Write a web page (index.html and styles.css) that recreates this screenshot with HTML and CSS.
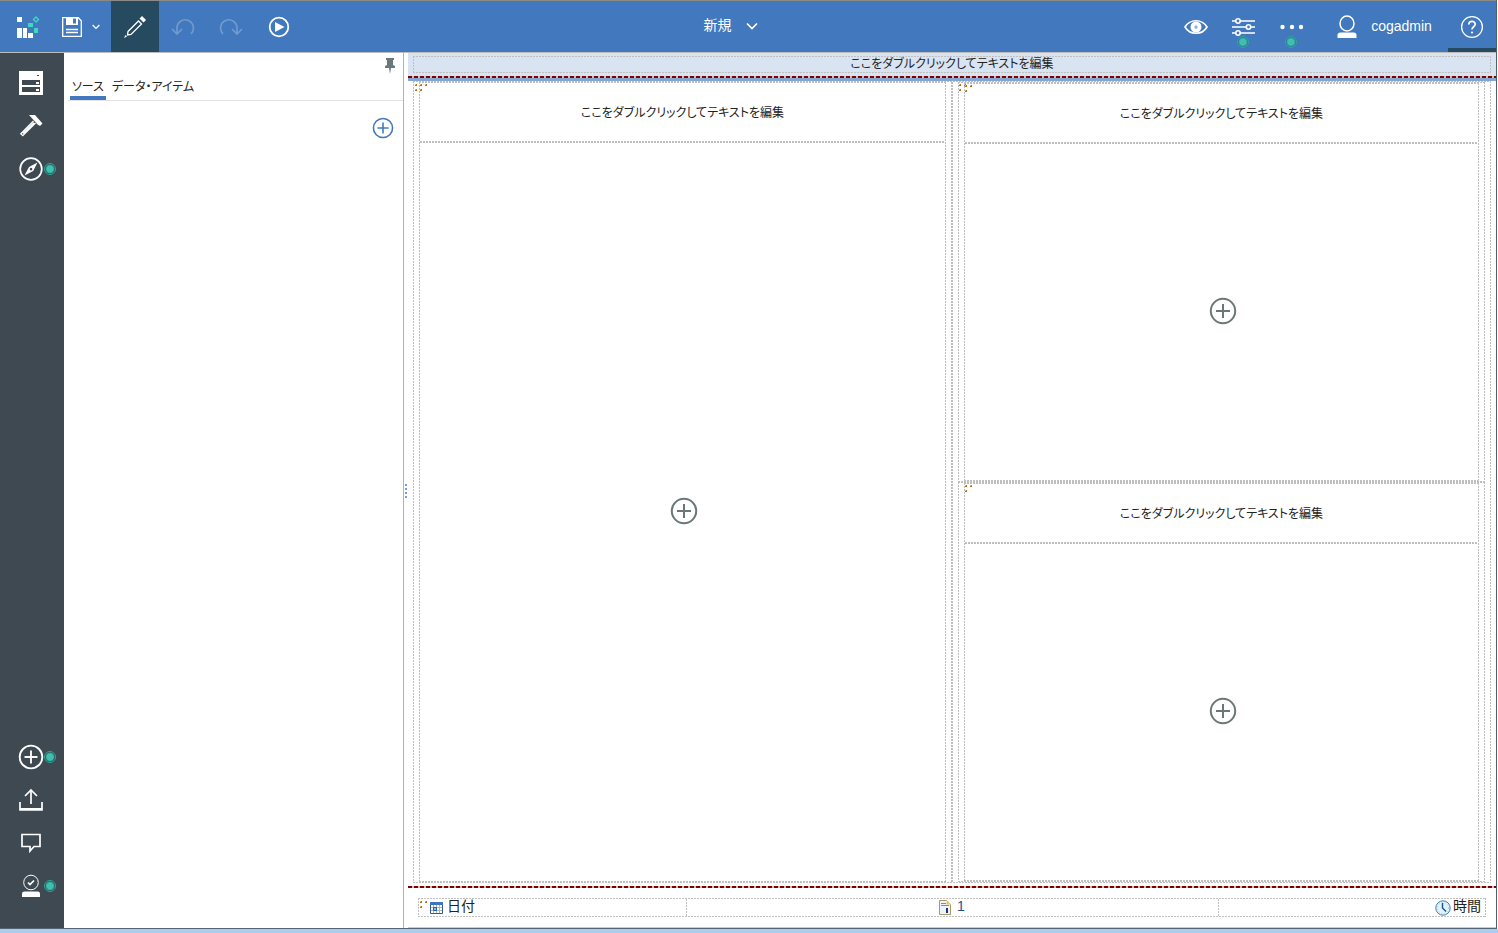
FILE: index.html
```html
<!DOCTYPE html>
<html lang="ja">
<head>
    <meta charset="UTF-8">
    <meta name="viewport" content="width=device-width, initial-scale=1.0">
    <title>新規</title>
    <link rel="stylesheet" href="styles.css">
</head>
<body>
  <svg class="defs" aria-hidden="true">
    <symbol id="plus" viewBox="0 0 28 28">
      <circle cx="14" cy="14" r="12.2"/>
      <path d="M14 7v14M7 14h14"/>
    </symbol>
    <symbol id="grip" viewBox="0 0 8 8">
      <path fill="#b87410" d="M0 0h2v2H0zM5 0h2v2H5zM0 5h2v2H0z"/>
      <path fill="#f0b868" d="M0 0h1v1H0zM5 0h1v1H5zM0 5h1v1H0z"/>
    </symbol>
    <symbol id="badge" viewBox="0 0 12 12">
      <circle cx="6" cy="6" r="5.5" fill="none" stroke="#2fa596" stroke-width="1"/>
      <circle cx="6" cy="6" r="4.2" fill="#41bfae" stroke="#1f7f80" stroke-width=".6"/>
    </symbol>
  </svg>

  <div class="window">
    <!-- アプリバー -->
    <header class="appbar">
      <button class="logo" aria-label="ホーム">
        <svg width="24" height="24" viewBox="0 0 24 24">
          <path fill="#fff" d="M1 2h5v5H1zM1 13h5v10H1zM7 13h4v10H7zM12 18h5v5h-5z"/>
          <path fill="#41d6c3" d="M12 8h5v4h-5zM18 13h4v5h-4z"/>
          <path fill="none" stroke="#41d6c3" stroke-width="1.4" d="M20 2l2.5 2.5L20 7l-2.500-2.500z"/>
        </svg>
      </button>
      <button class="save" aria-label="保存">
        <svg width="20" height="20" viewBox="0 0 20 20">
          <path fill="none" stroke="#fff" stroke-width="1.300" d="M.7.7h15.500l3.100 3.100v15.500H.7zM4 12.500h12M4 15.500h12"/>
          <path fill="#fff" fill-rule="evenodd" d="M4 0h12v8H4zM11 1.500v5h3v-5z"/>
        </svg>
        <svg width="8" height="6" viewBox="0 0 8 6"><path class="line" d="M.6 1L4 4.400 7.400 1"/></svg>
      </button>
      <button class="tool on" aria-label="編集">
        <svg width="24" height="24" viewBox="0 0 24 24">
          <path class="line" d="M5 16.500L15.500 6l3 3L8 19.500l-3.500.5z"/>
          <path fill="#fff" d="M16.500 3.500L19 1l4 4-2.500 2.500zM1 23l1.500-3L4 21.500z"/>
        </svg>
      </button>
      <button class="tool off" aria-label="元に戻す">
        <svg width="24" height="24" viewBox="0 0 24 24"><path class="line bold" d="M6 18.500v-5.500a8.200 8.200 0 1 1 14 5.800M1 14l5 5 5-5"/></svg>
      </button>
      <button class="tool off" aria-label="やり直し">
        <svg width="24" height="24" viewBox="0 0 24 24"><path class="line bold" d="M18 18.500v-5.500a8.200 8.200 0 1 0-14 5.800M23 14l-5 5-5-5"/></svg>
      </button>
      <button class="tool" aria-label="実行">
        <svg width="22" height="22" viewBox="0 0 22 22">
          <circle cx="11" cy="11" r="9.300" fill="none" stroke="#fff" stroke-width="1.800"/>
          <path fill="#fff" d="M7 6l9.500 5L7 16z"/>
        </svg>
      </button>

      <button class="title">新規
        <svg width="12" height="8" viewBox="0 0 12 8"><path class="line bold" d="M1 1.500l5 5 5-5"/></svg>
      </button>

      <button class="tool" aria-label="プレビュー">
        <svg width="24" height="16" viewBox="0 0 24 16">
          <path fill="none" stroke="#fff" stroke-width="1.600" d="M1 8C6-.4 18-.4 23 8 18 16.400 6 16.400 1 8z"/>
          <circle cx="12" cy="8" r="3.500" fill="none" stroke="#fff" stroke-width="4"/>
          <circle cx="12" cy="8" r=".8" fill="#fff"/>
        </svg>
      </button>
      <button class="tool" aria-label="プロパティー">
        <svg width="24" height="18" viewBox="0 0 24 18">
          <path class="line bold" d="M0 3h23M0 9h23M0 15h23"/>
          <g fill="#4178be" stroke="#fff" stroke-width="1.600"><circle cx="6" cy="3" r="2.200"/><circle cx="16.500" cy="9" r="2.200"/><circle cx="6" cy="15" r="2.200"/></g>
        </svg>
        <svg class="badge"><use href="#badge"/></svg>
      </button>
      <button class="tool" aria-label="その他">
        <svg width="24" height="6" viewBox="0 0 24 6"><g fill="#fff"><circle cx="2.500" cy="3" r="2.200"/><circle cx="12" cy="3" r="2.200"/><circle cx="21" cy="3" r="2.200"/></g></svg>
        <svg class="badge"><use href="#badge"/></svg>
      </button>
      <button class="user">
        <svg width="20" height="24" viewBox="0 0 20 24">
          <ellipse cx="10" cy="8.500" rx="7" ry="7.500" fill="none" stroke="#fff" stroke-width="1.500"/>
          <path fill="#fff" d="M.5 23v-3q0-2.500 3-2.500h13q3 0 3 2.500v3z"/>
        </svg>
        <span>cogadmin</span>
      </button>
      <button class="tool help" aria-label="ヘルプ">
        <svg width="24" height="24" viewBox="0 0 24 24">
          <circle cx="12" cy="12" r="10.400" fill="none" stroke="#fff" stroke-width="1.300"/>
          <path class="line bold" d="M8.800 9.500c0-4.300 6.600-4.200 6.400-.2-.1 2.400-3.200 2.600-3.200 5.200"/>
          <circle cx="12" cy="17.500" r="1.100" fill="#fff"/>
        </svg>
      </button>
    </header>

    <div class="main">
      <!-- 左のナビ -->
      <nav class="rail">
        <button aria-label="データ">
          <svg width="24" height="24" viewBox="0 0 24 24">
            <path fill="#fff" fill-rule="evenodd" d="M0 0h24v24H0zM3 9v5h18V9zM3 16v5h18v-5z"/>
            <path fill="#3f4952" d="M18 4h2v1h-2z"/>
            <path fill="#fff" d="M17 11h3v2h-3zM17 18h3v2h-3z"/>
          </svg>
        </button>
        <button aria-label="ツールボックス">
          <svg width="24" height="24" viewBox="0 0 24 24">
            <path fill="#fff" d="M10 1h6l7.500 8.500-2.500 2.500-2.500-1.500L15 6.500z"/>
            <path class="line" d="M14.500 7L1.800 19.700l2 2L16.500 9M15 8.800L4 19.500"/>
          </svg>
        </button>
        <button aria-label="ナビゲート">
          <svg width="24" height="24" viewBox="0 0 24 24">
            <circle cx="12" cy="12" r="10.800" fill="none" stroke="#fff" stroke-width="1.700"/>
            <path fill="#fff" fill-rule="evenodd" d="M18.500 5.500L14.200 14 5.500 18.500 10 10zM12 10.800a1.300 1.300 0 1 0 .1 0z"/>
          </svg>
          <svg class="badge"><use href="#badge"/></svg>
        </button>
        <button class="bottom" aria-label="新規作成">
          <svg width="26" height="26" class="ring white"><use href="#plus"/></svg>
          <svg class="badge"><use href="#badge"/></svg>
        </button>
        <button aria-label="アップロード">
          <svg width="24" height="24" viewBox="0 0 24 24">
            <path class="line bold" d="M12 16V2M6 8l6-6 6 6M1 14v8h22v-8"/>
            <path fill="#fff" d="M1 20h22v2H1z"/>
          </svg>
        </button>
        <button aria-label="コメント">
          <svg width="20" height="20" viewBox="0 0 20 20"><path class="line bold" d="M1 1.500h18v12h-6L9 18v-4.500H1z"/></svg>
        </button>
        <button aria-label="マイ・スケジュール">
          <svg width="20" height="24" viewBox="0 0 20 24">
            <circle cx="10" cy="8.500" r="7.300" fill="none" stroke="#fff" stroke-width="1"/>
            <path class="line bold" d="M7 8.500l2 2 4-4"/>
            <path fill="#fff" d="M1 23v-3.500q0-2 2.500-2h13q2.500 0 2.500 2V23z"/>
          </svg>
          <svg class="badge"><use href="#badge"/></svg>
        </button>
      </nav>

      <!-- ソース・パネル -->
      <aside class="panel">
        <button class="pin" aria-label="ピン留め">
          <svg width="10" height="16" viewBox="0 0 10 16"><path fill="#6b787b" d="M1 0h8v2H8v5l2 1v2H6l-1 6-1-6H0V8l2-1V2H1z"/></svg>
        </button>
        <div class="tabs">
          <button class="active">ソース</button>
          <button>データ・アイテム</button>
        </div>
        <button class="add" aria-label="ソースの追加">
          <svg width="22" height="22" class="ring blue"><use href="#plus"/></svg>
        </button>
      </aside>
      <div class="splitter"><i></i><i></i><i></i><i></i></div>

      <!-- レポート -->
      <main class="report">
        <div class="page-head">
          <p class="dash">ここをダブルクリックしてテキストを編集</p>
        </div>
        <div class="red-line"></div>
        <div class="blue-line"></div>

        <div class="page-body dash">
          <div class="col left">
            <svg class="grip"><use href="#grip"/></svg>
            <section class="block dash">
              <svg class="grip"><use href="#grip"/></svg>
              <p>ここをダブルクリックしてテキストを編集</p>
              <div class="drop"><button aria-label="追加"><svg width="28" height="28" class="ring"><use href="#plus"/></svg></button></div>
            </section>
          </div>
          <div class="col right">
            <div class="row dash">
              <svg class="grip"><use href="#grip"/></svg>
              <section class="block dash">
                <svg class="grip"><use href="#grip"/></svg>
                <p>ここをダブルクリックしてテキストを編集</p>
                <div class="drop"><button aria-label="追加"><svg width="28" height="28" class="ring"><use href="#plus"/></svg></button></div>
              </section>
            </div>
            <div class="row dash">
              <section class="block dash">
                <svg class="grip"><use href="#grip"/></svg>
                <p>ここをダブルクリックしてテキストを編集</p>
                <div class="drop"><button aria-label="追加"><svg width="28" height="28" class="ring"><use href="#plus"/></svg></button></div>
              </section>
            </div>
          </div>
        </div>

        <div class="red-line"></div>
        <footer class="page-foot dash">
          <div class="date">
            <svg class="grip"><use href="#grip"/></svg>
            <svg width="13" height="12" viewBox="0 0 13 12">
              <path fill="#fff" stroke="#34568f" d="M.5.5h12v11H.5z"/>
              <path fill="#3f74c4" d="M0 0h13v3H0z"/>
              <path stroke="#a9b6a4" d="M3.500 3v8M6.500 3v8M9.500 3v8M1 5.500h11M1 8.500h11"/>
              <path fill="#8cc4ee" stroke="#1f5da8" d="M3.500 5.500h3v3h-3z"/>
            </svg>
            <span>日付</span>
          </div>
          <div class="number">
            <svg width="12" height="15" viewBox="0 0 12 15">
              <path fill="#eef3fb" stroke="#a89870" d="M.5.5h7l4 4v10H.5z"/>
              <path fill="#e9c468" d="M7.500 0L12 4.500H7.500z"/>
              <path stroke="#6a8fca" d="M2 3.500h5M2 5.500h8"/>
              <path fill="#1d3768" d="M7 8h2v5H7z"/>
            </svg>
            <span>1</span>
          </div>
          <div class="time">
            <svg width="16" height="16" viewBox="0 0 16 16">
              <circle cx="8" cy="8" r="7.200" fill="#e2f2fc" stroke="#3d7fb0"/>
              <circle cx="8" cy="8" r="5.500" fill="none" stroke="#a5cfe8" stroke-dasharray="1 2"/>
              <path fill="none" stroke="#174f86" stroke-width="1.400" d="M7.500 3v5l3.500 3.500"/>
            </svg>
            <span>時間</span>
          </div>
        </footer>
      </main>
    </div>
  </div>
</body>
</html>
```

FILE: styles.css
```css
* {
  box-sizing: border-box;
}

body {
  margin: 0;
  height: 100vh;
  display: flex;
  flex-direction: column;
  padding-right: 1px;
  border-bottom: 4px solid #aacdf0;
  background: #fff;
  color: #222;
  font-family: "Liberation Sans", "Noto Sans CJK JP", sans-serif;
  font-size: 12px;
  line-height: 15px;
  font-feature-settings: "palt";
}

button {
  display: flex;
  align-items: center;
  justify-content: center;
  flex: none;
  padding: 0;
  border: 0;
  background: none;
  color: inherit;
  font: inherit;
  font-feature-settings: inherit;
  cursor: pointer;
}

p {
  margin: 0;
  text-align: center;
}

svg {
  flex: none;
}

.defs {
  position: absolute;
  width: 0;
  height: 0;
}

.line {
  fill: none;
  stroke: #fff;
  stroke-width: 1.3;
}

.line.bold {
  stroke-width: 1.7;
}

.ring {
  fill: none;
  stroke: #6b7777;
  stroke-width: 2;
}

.ring.white {
  stroke: #fff;
}

.ring.blue {
  stroke: #4178be;
}

.badge {
  position: absolute;
  width: 12px;
  height: 12px;
}

.window {
  flex: 1;
  min-height: 0;
  display: flex;
  flex-direction: column;
  border-right: 1px solid #4d6070;
  border-bottom: 1px solid #566575;
}

/* アプリバー */
.appbar {
  display: flex;
  flex: none;
  height: 53px;
  border-top: 1px solid #8a8a86;
  border-bottom: 1px solid #bcbcbc;
  background: #4178be;
  color: #fff;
}

.logo {
  width: 56px;
}

.save {
  width: 55px;
  gap: 10px;
  padding-right: 5px;
}

.tool {
  position: relative;
  width: 48px;
}

.tool.on {
  background: #264a60;
}

.tool.off {
  opacity: .25;
}

.tool .badge {
  top: 35px;
  left: 17px;
}

.title {
  flex: 1;
  gap: 14px;
  padding: 0 14px 2px 0;
  font-size: 14px;
}

.user {
  width: 132px;
  gap: 14px;
  padding-left: 5px;
  font-size: 14px;
}

.help {
  border-bottom: 4px solid #264a60;
  padding-top: 4px;
}

.main {
  flex: 1;
  min-height: 0;
  display: flex;
}

/* 左のナビ */
.rail {
  display: flex;
  flex-direction: column;
  width: 64px;
  padding: 8px 0 21px;
  background: #3f4952;
}

.rail button {
  position: relative;
  height: 43px;
  padding-right: 2px;
}

.rail .bottom {
  margin-top: auto;
}

.rail .badge {
  top: 16px;
  left: 44px;
}

/* ソース・パネル */
.panel {
  display: flex;
  flex-direction: column;
  width: 340px;
  padding-left: 4px;
  border-right: 1px solid #a9b4b6;
}

.pin {
  align-self: flex-end;
  margin: 5px 8px 0 0;
}

.tabs {
  display: flex;
  gap: 4px;
  height: 27px;
  padding-left: 2px;
  border-bottom: 1px solid #e3e3e3;
}

.tabs button {
  height: 26px;
  padding: 4px 2px 0;
  border-bottom: 4px solid transparent;
}

.tabs .active {
  border-color: #4178be;
}

.add {
  align-self: flex-end;
  margin: 16px 9px 0 0;
}

.splitter {
  display: flex;
  flex-direction: column;
  align-items: center;
  justify-content: center;
  gap: 2px;
  width: 4px;
}

.splitter i {
  width: 2px;
  height: 2px;
  background: #6f9fe8;
}

/* レポート */
.report {
  flex: 1;
  min-width: 0;
  display: flex;
  flex-direction: column;
  border-bottom: 1px solid #c4ccd4;
}

/* 編集用の点線枠 */
.dash {
  --h: repeating-linear-gradient(90deg, #bfbfbf 0 2px, transparent 2px 3px);
  --v: repeating-linear-gradient(#bfbfbf 0 2px, transparent 2px 3px);
  padding: 1px;
  background:
    var(--h) top / 100% 1px no-repeat,
    var(--h) bottom / 100% 1px no-repeat,
    var(--v) left / 1px 100% no-repeat,
    var(--v) right / 1px 100% no-repeat;
}

.page-head {
  padding: 3px 5px;
  background: #d8e4f2;
}

.red-line {
  flex: none;
  height: 2px;
  background: repeating-linear-gradient(90deg, #800000 0 4px, #c8c0c0 4px 6px);
}

.blue-line {
  flex: none;
  height: 3px;
  background: #83a6d3;
}

.page-body {
  flex: 1;
  display: flex;
  margin: 0 5px 3px;
}

.col {
  position: relative;
  flex: 1;
  display: flex;
  flex-direction: column;
  padding: 0 5px;
}

.col.left {
  margin-right: 2px;
}

.col.right::before {
  content: "";
  position: absolute;
  top: 0;
  bottom: 0;
  left: -2px;
  width: 2px;
  background: repeating-linear-gradient(#bfbfbf 0 2px, transparent 2px 3px);
}

.row {
  position: relative;
  flex: 1;
  display: flex;
  padding: 1px 6px;
}

.block {
  position: relative;
  flex: 1;
  display: flex;
  flex-direction: column;
}

.block p {
  height: 59px;
  line-height: 60px;
  background: repeating-linear-gradient(90deg, #bfbfbf 0 2px, transparent 2px 3px) bottom / 100% 1px no-repeat;
}

.drop {
  flex: 1;
  display: flex;
  align-items: center;
  justify-content: center;
  padding: 0 0 2px 2px;
  background: repeating-linear-gradient(90deg, #bfbfbf 0 2px, transparent 2px 3px) top / 100% 1px no-repeat;
}

.grip {
  position: absolute;
  top: 2px;
  left: 1px;
  width: 8px;
  height: 8px;
}

.page-foot {
  display: grid;
  grid-template-columns: 1fr 2fr 1fr;
  height: 19px;
  margin: 10px;
  font-size: 14px;
}

.page-foot div {
  position: relative;
  display: flex;
  align-items: center;
  gap: 4px;
}

.page-foot span {
  padding-bottom: 2px;
}

.page-foot .date {
  padding-left: 11px;
}

.page-foot .number {
  justify-content: center;
  gap: 6px;
  color: #1f4f8f;
  background:
    repeating-linear-gradient(#bfbfbf 0 2px, transparent 2px 3px) left / 1px 100% no-repeat,
    repeating-linear-gradient(#bfbfbf 0 2px, transparent 2px 3px) right / 1px 100% no-repeat;
}

.page-foot .time {
  justify-content: flex-end;
  gap: 2px;
  padding-right: 4px;
}
```
